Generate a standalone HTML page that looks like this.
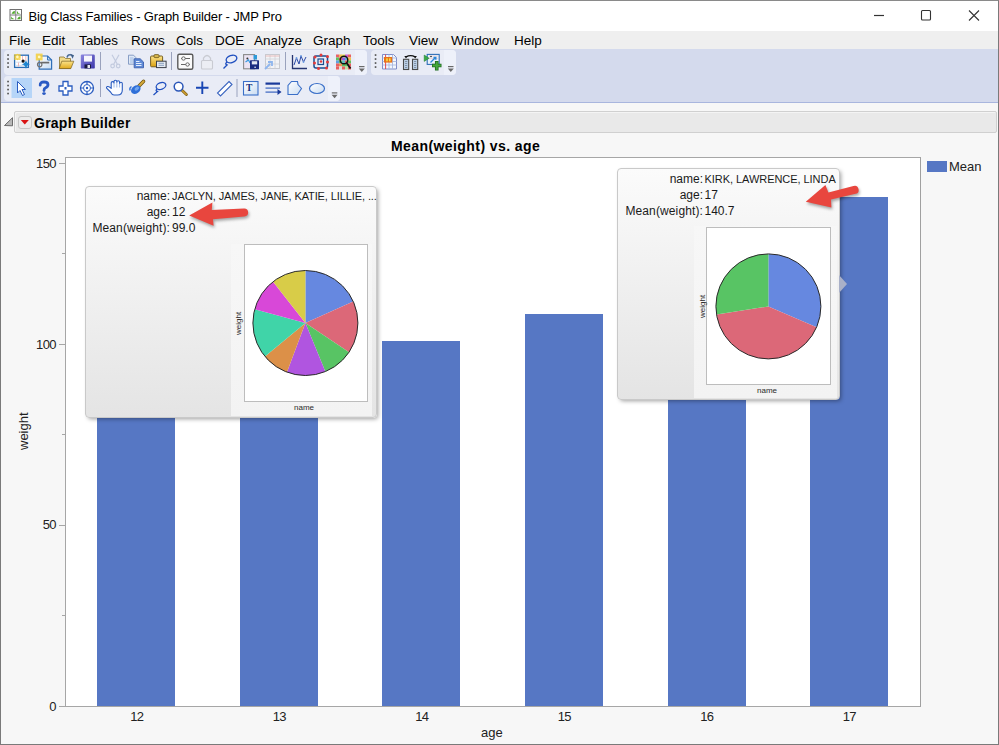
<!DOCTYPE html>
<html><head><meta charset="utf-8">
<style>
*{box-sizing:border-box}
html,body{margin:0;padding:0}
body{width:999px;height:745px;overflow:hidden;position:relative;background:#f7f7f7;font-family:"Liberation Sans",sans-serif;color:#000}
.a{position:absolute}
.t{position:absolute;white-space:nowrap;line-height:1}
#win{left:0;top:0;width:999px;height:745px;border:1px solid #7a7a7a;border-top-color:#8a8a8a}
#titlebar{left:1px;top:1px;width:997px;height:30px;background:#fff}
#menubar{left:1px;top:31px;width:997px;height:18px;background:#efefef}
#tbarea{left:1px;top:49px;width:997px;height:54px;background:#d4daed;border-bottom:1px solid #a9b6de}
.panel{position:absolute;background:#e9ecf6;border-radius:4px}
.menu{position:absolute;top:34px;font-size:13.5px;line-height:14px;white-space:nowrap;color:#000}
#hdr{left:14px;top:111px;width:983px;height:22px;background:#e9e9e9;border:1px solid #d0d0d0;border-radius:2px;box-shadow:inset 1px 1px 0 #f4f4f4}
.frame{left:65px;top:157px;width:856px;height:550px;background:#fff;border:1px solid #a6a6a6;border-right-color:#a0a0a0}
.bar{position:absolute;background:#5677c4;bottom:0}
.ylab{position:absolute;font-size:13px;line-height:13px;color:#222;text-align:right;width:30px;letter-spacing:-0.6px}
.tick{position:absolute;height:1px;width:6px;background:#a6a6a6;left:59px}
.xlab{position:absolute;font-size:13px;line-height:13px;color:#222;width:40px;text-align:center;top:709.5px;letter-spacing:-0.6px;text-indent:0.6px}
.tip{position:absolute;border:1px solid #c9c9c9;border-radius:4px;background:linear-gradient(#fbfbfb,#e4e4e4);box-shadow:2px 2px 4px -1px rgba(0,0,0,0.38)}
.tiptext{position:absolute;font-size:12px;line-height:16px;white-space:nowrap;color:#1a1a1a}
.col{background:linear-gradient(#f7f7f7,#f3f3f3)}
.pframe{background:#fff;border:1px solid #bdbdbd}
.plab{position:absolute;font-size:8px;line-height:9px;white-space:nowrap;color:#2a2a2a}
</style></head>
<body>
<div class="a" id="titlebar"></div>
<div class="a" id="menubar"></div>
<div class="a" id="tbarea"></div>
<div class="a" id="win"></div>

<!-- title -->
<div class="t" style="left:28.5px;top:10px;font-size:13px;color:#000;letter-spacing:-0.15px">Big Class Families - Graph Builder - JMP Pro</div>

<!-- menu -->
<div class="menu" style="left:9px">File</div>
<div class="menu" style="left:42px">Edit</div>
<div class="menu" style="left:79px">Tables</div>
<div class="menu" style="left:131px">Rows</div>
<div class="menu" style="left:176px">Cols</div>
<div class="menu" style="left:215px">DOE</div>
<div class="menu" style="left:254px">Analyze</div>
<div class="menu" style="left:313px">Graph</div>
<div class="menu" style="left:363px">Tools</div>
<div class="menu" style="left:409px">View</div>
<div class="menu" style="left:451px">Window</div>
<div class="menu" style="left:514px">Help</div>

<!-- toolbar panels -->
<div class="panel" style="left:4px;top:50px;width:363px;height:25px"></div>
<div class="panel" style="left:371px;top:50px;width:85px;height:25px"></div>
<div class="panel" style="left:4px;top:76px;width:336px;height:25px"></div>
<div class="a" style="left:355px;top:50px;width:12px;height:25px;background:#eef1fa;border-radius:0 4px 4px 0"></div>
<div class="a" style="left:444px;top:50px;width:12px;height:25px;background:#eef1fa;border-radius:0 4px 4px 0"></div>
<div class="a" style="left:328px;top:76px;width:12px;height:25px;background:#eef1fa;border-radius:0 4px 4px 0"></div>

<svg class="a" style="left:0;top:0" width="999" height="105" viewBox="0 0 999 105">
<defs>
<linearGradient id="gFolder" x1="0" y1="0" x2="0" y2="1"><stop offset="0" stop-color="#fbe38a"/><stop offset="1" stop-color="#e0a91c"/></linearGradient>
<linearGradient id="gFloppy" x1="0" y1="0" x2="1" y2="1"><stop offset="0" stop-color="#8c86e0"/><stop offset="1" stop-color="#3a35a8"/></linearGradient>
<linearGradient id="gClip" x1="0" y1="0" x2="0" y2="1"><stop offset="0" stop-color="#fde48a"/><stop offset="1" stop-color="#d9a010"/></linearGradient>
<linearGradient id="gPale" x1="0" y1="0" x2="1" y2="1"><stop offset="0" stop-color="#ffffff"/><stop offset="1" stop-color="#c9dcf2"/></linearGradient>
</defs>
<!-- title icon -->
<g>
<rect x="10" y="9.5" width="11.5" height="11" fill="#fff" stroke="#707070" stroke-width="1"/>
<line x1="15.75" y1="9.5" x2="15.75" y2="20.5" stroke="#808080" stroke-width="1"/>
<line x1="10" y1="15" x2="21.5" y2="15" stroke="#808080" stroke-width="1"/>
<path d="M11.5,13.8 L14.8,13.8 L14.8,10.8 Q12.5,11.5 11.5,13.8Z" fill="#4fa82a"/>
<path d="M17,11 Q18,13.5 20.5,13.8 L17,13.8Z" fill="#4fa82a"/>
<path d="M11.2,16.2 Q12,19 14.8,19.2 L11.2,19.2Z" fill="#4fa82a"/>
<path d="M17,19.2 L20.5,19.2 L20.5,16.2 Q18,16.8 17,19.2Z" fill="#4fa82a"/>
</g>
<!-- window controls -->
<line x1="874" y1="15.5" x2="884" y2="15.5" stroke="#333" stroke-width="1.2"/>
<rect x="921.5" y="10.5" width="9" height="9.5" rx="1" fill="none" stroke="#333" stroke-width="1.1"/>
<path d="M969,10.5 L979,20.5 M979,10.5 L969,20.5" stroke="#333" stroke-width="1.1"/>

<!-- grips -->
<g fill="#4a4a4a">
<rect x="7.25" y="54.25" width="1.6" height="1.6"/><rect x="7.25" y="58.25" width="1.6" height="1.6"/><rect x="7.25" y="62.25" width="1.6" height="1.6"/><rect x="7.25" y="66.25" width="1.6" height="1.6"/>
<rect x="374.75" y="54.25" width="1.6" height="1.6"/><rect x="374.75" y="58.25" width="1.6" height="1.6"/><rect x="374.75" y="62.25" width="1.6" height="1.6"/><rect x="374.75" y="66.25" width="1.6" height="1.6"/>
<rect x="7.25" y="80.75" width="1.6" height="1.6"/><rect x="7.25" y="84.75" width="1.6" height="1.6"/><rect x="7.25" y="88.75" width="1.6" height="1.6"/><rect x="7.25" y="92.75" width="1.6" height="1.6"/>
</g>
<!-- separators -->
<g fill="#9aa2bd">
<rect x="100" y="52" width="1" height="18"/><rect x="171" y="52" width="1" height="18"/><rect x="285" y="52" width="1" height="18"/>
<rect x="100" y="79" width="1" height="18"/><rect x="236.5" y="79" width="1" height="18"/>
</g>
<!-- dropdown glyphs -->
<g fill="#6a6a6a">
<rect x="359" y="66" width="5.5" height="1.2"/><path d="M358.8,68.5 L364.8,68.5 L361.8,72Z"/>
<rect x="448" y="66" width="5.5" height="1.2"/><path d="M447.8,68.5 L453.8,68.5 L450.8,72Z"/>
<rect x="331.8" y="92.3" width="5.5" height="1.2"/><path d="M331.6,94.8 L337.6,94.8 L334.6,98.3Z"/>
</g>

<!-- ROW 1 -->
<!-- new data table -->
<g>
<rect x="14.6" y="55.2" width="13.8" height="12.2" fill="#fff" stroke="#2a6db5" stroke-width="1.3"/>
<path d="M15.5,62.2 H28 M15.5,65.4 H28" stroke="#c8d8ea" stroke-width="0.8"/>
<path d="M22.5,56 V61 M25.8,56 V61 M18.5,62.5 V66.5" stroke="#f0a8a8" stroke-width="0.8"/>
<path d="M17.4,53.4 L18.4,56 L21,57 L18.4,58 L17.4,60.6 L16.4,58 L13.8,57 L16.4,56Z" fill="#f2c62a"/>
<rect x="14.2" y="54" width="6.4" height="6" fill="#f5cf3a" opacity="0.75"/>
<circle cx="17.4" cy="57" r="1.4" fill="#fff7c0"/>
<circle cx="23.1" cy="61.1" r="1.6" fill="#111"/>
<path d="M26,60 Q26.6,63.6 30,64.3 Q26.6,65 26,69 Q25.4,65 21.5,64.3 Q25.4,63.6 26,60Z" fill="#1e86d0"/>
</g>
<!-- new script -->
<g>
<path d="M39.2,56 H47.6 L51.6,60 V69.2 H39.2Z" fill="url(#gPale)" stroke="#2f6fb8" stroke-width="1.2"/>
<path d="M47.6,56 V60 H51.6" fill="none" stroke="#2f6fb8" stroke-width="1"/>
<rect x="35.8" y="53.6" width="6.8" height="6.8" fill="#f5cf3a" opacity="0.85"/>
<circle cx="39.2" cy="57" r="1.4" fill="#fff7c0"/>
<path d="M40.5,62.6 H49.2" stroke="#6a6a6a" stroke-width="1.7"/>
<circle cx="39.7" cy="64.6" r="2.2" fill="none" stroke="#737373" stroke-width="1.2"/>
</g>
<!-- open -->
<g>
<path d="M59.5,57 H64 L65.5,58.5 H70.5 V68.5 H59.5Z" fill="#f3dc8a" stroke="#8a7430" stroke-width="0.8"/>
<path d="M61.8,61.2 H73.8 L70.8,68.6 H59.2Z" fill="url(#gFolder)" stroke="#7a6020" stroke-width="0.7"/>
<path d="M67,57.5 Q68,53.8 71.5,55" fill="none" stroke="#4f6f98" stroke-width="1.5"/>
<path d="M70.2,53.8 L74,55.2 L72.6,58.8Z" fill="#3f5f88"/>
</g>
<!-- save -->
<g>
<rect x="80.8" y="54.6" width="14" height="14" rx="1.2" fill="url(#gFloppy)"/>
<rect x="84" y="55.6" width="8" height="6" fill="#f6f6fc"/>
<rect x="84.5" y="64.4" width="6.5" height="4" fill="#1a1a40"/>
<rect x="87.5" y="65" width="2.5" height="3" fill="#e8e8f0"/>
</g>
<!-- copy -->
<g>
<path d="M128.5,55.2 H133.5 L135.8,57.5 V64.2 H128.5Z" fill="#dfe8f6" stroke="#7d95c0" stroke-width="0.9"/>
<path d="M130,58 H133.5 M130,60 H134 M130,62 H134" stroke="#8fb0e0" stroke-width="0.8"/>
<path d="M134.2,58.8 H140.2 L143.5,62 V67.8 H134.2Z" fill="#5f8ad6" stroke="#3a5fae" stroke-width="0.9"/>
<path d="M136,61.5 H139.5 M136,63.5 H141.5 M136,65.5 H141.5" stroke="#f4f8ff" stroke-width="0.9"/>
</g>
<!-- paste -->
<g>
<rect x="150.6" y="56" width="12" height="10.8" rx="1" fill="url(#gClip)" stroke="#6a5418" stroke-width="0.9"/>
<rect x="154" y="54.6" width="5" height="3" rx="1" fill="#d8b850" stroke="#5a4810" stroke-width="0.7"/>
<rect x="156.5" y="61.2" width="9.6" height="6.4" fill="#e6ebf3" stroke="#3a3f4a" stroke-width="1"/>
<path d="M158.5,63.3 H164 M158.5,65.3 H164" stroke="#6f8ab0" stroke-width="0.8"/>
</g>
<!-- scissors2 -->
<g stroke="#c2cade" fill="none" stroke-width="1.2">
<path d="M112,54.8 L117.2,64 M119,54.8 L113.8,64"/>
<circle cx="112.6" cy="66" r="1.8"/><circle cx="118.2" cy="66" r="1.8"/>
</g>
<!-- data filter -->
<g>
<rect x="177.8" y="54.3" width="15" height="15" rx="1.5" fill="#fafafa" stroke="#5a5a5a" stroke-width="1.4"/>
<path d="M181,58.5 H190 M181,64.5 H190" stroke="#666" stroke-width="1"/>
<circle cx="183.5" cy="58.5" r="1.7" fill="#fff" stroke="#666" stroke-width="1"/>
<circle cx="187.5" cy="64.5" r="1.7" fill="#fff" stroke="#666" stroke-width="1"/>
</g>
<!-- lock disabled -->
<g>
<path d="M203.5,60.5 V58 Q207,53 210.5,58 V60.5" fill="none" stroke="#c9cbd2" stroke-width="1.3"/>
<rect x="201.5" y="60.5" width="11" height="8.5" rx="1" fill="#eceef4" stroke="#c9cbd2" stroke-width="1.1"/>
</g>
<!-- lasso -->
<g fill="none" stroke="#1f4fbf" stroke-width="1.4">
<ellipse cx="231.5" cy="59" rx="5.5" ry="3.5" transform="rotate(-20 231.5 59)"/>
<path d="M227,62 Q224.5,64 227,65 L223.5,68.5"/>
</g>
<!-- report/save icon -->
<g>
<rect x="243.6" y="54.6" width="11" height="14.2" fill="#ece4f4" stroke="#8a8a8a" stroke-width="1.1"/>
<circle cx="247.4" cy="58.6" r="1" fill="#333"/>
<path d="M245.5,62 L248.5,60 L250,63" fill="none" stroke="#3a9ae0" stroke-width="1.2"/>
<rect x="253.5" y="55" width="3.5" height="4.5" fill="#2e9ad8"/>
<rect x="250" y="60.2" width="9" height="9" rx="0.5" fill="#1a2c80"/>
<rect x="251.8" y="61.2" width="5.4" height="3.2" fill="#e4e8f4"/>
<rect x="254.5" y="66.6" width="1.2" height="1.4" fill="#fff"/>
</g>
<!-- disabled table -->
<g>
<rect x="265.5" y="54.5" width="14" height="14" fill="#f2f3f6" stroke="#c8cad0" stroke-width="1"/>
<path d="M265.5,59 H279.5 M265.5,64 H279.5 M270,54.5 V68.5 M275,54.5 V68.5" stroke="#cfd1d8" stroke-width="0.8"/>
<path d="M265.5,56 H279.5" stroke="#e8b0b0" stroke-width="0.8"/>
<path d="M265,69 L270,64 M268,62 H272 V66" fill="none" stroke="#8fb6ee" stroke-width="1.8"/>
</g>
<!-- line chart -->
<g>
<path d="M292.5,55 V68.5 H307" fill="none" stroke="#253470" stroke-width="1.3"/>
<path d="M294,65 L296.5,58 L299,64 L301,56 L303.5,62 L306,57" fill="none" stroke="#2a4aa8" stroke-width="1"/>
<circle cx="296.5" cy="58" r="0.9" fill="#6a9ae0"/><circle cx="301" cy="56" r="0.9" fill="#6a9ae0"/><circle cx="303.5" cy="62" r="0.9" fill="#6a9ae0"/>
</g>
<!-- cube -->
<g>
<rect x="314" y="56" width="13.5" height="12" rx="2" fill="none" stroke="#1a4d90" stroke-width="1.5"/>
<rect x="318" y="59" width="5.5" height="5.5" fill="none" stroke="#1a4d90" stroke-width="1.2"/>
<g fill="#e33b3b"><circle cx="315" cy="57" r="1.5"/><circle cx="321" cy="55" r="1.5"/><circle cx="327.5" cy="56.5" r="1.5"/><circle cx="314.5" cy="63" r="1.5"/><circle cx="327.5" cy="62" r="1.5"/><circle cx="318.5" cy="68.5" r="1.5"/><circle cx="326.5" cy="68" r="1.5"/><circle cx="321" cy="61.5" r="1.2"/></g>
</g>
<!-- heatmap magnifier -->
<g>
<rect x="336" y="54.5" width="15" height="15" fill="#eee"/>
<g>
<rect x="336" y="54.5" width="3" height="3" fill="#e8606a"/><rect x="339" y="54.5" width="3" height="3" fill="#f0c050"/><rect x="342" y="54.5" width="3" height="3" fill="#e8e860"/><rect x="345" y="54.5" width="3" height="3" fill="#d060d0"/><rect x="348" y="54.5" width="3" height="3" fill="#e86060"/>
<rect x="336" y="57.5" width="3" height="3" fill="#60c060"/><rect x="339" y="57.5" width="3" height="3" fill="#e86060"/><rect x="342" y="57.5" width="3" height="3" fill="#9060e0"/><rect x="345" y="57.5" width="3" height="3" fill="#60b0e0"/><rect x="348" y="57.5" width="3" height="3" fill="#f0c050"/>
<rect x="336" y="60.5" width="3" height="3" fill="#60a0e0"/><rect x="339" y="60.5" width="3" height="3" fill="#60c060"/><rect x="342" y="60.5" width="3" height="3" fill="#60c0c0"/><rect x="345" y="60.5" width="3" height="3" fill="#e86060"/><rect x="348" y="60.5" width="3" height="3" fill="#60c060"/>
<rect x="336" y="63.5" width="3" height="3" fill="#e86060"/><rect x="339" y="63.5" width="3" height="3" fill="#f09050"/><rect x="342" y="63.5" width="3" height="3" fill="#60c060"/><rect x="345" y="63.5" width="3" height="3" fill="#60c060"/><rect x="348" y="63.5" width="3" height="3" fill="#e86060"/>
<rect x="336" y="66.5" width="3" height="3" fill="#e86060"/><rect x="339" y="66.5" width="3" height="3" fill="#e0e0e0"/><rect x="342" y="66.5" width="3" height="3" fill="#e86060"/><rect x="345" y="66.5" width="3" height="3" fill="#c0e0a0"/><rect x="348" y="66.5" width="3" height="3" fill="#e86060"/>
</g>
<circle cx="344" cy="60" r="3.8" fill="none" stroke="#111" stroke-width="1.4"/>
<path d="M346.5,62.8 L350.5,68.5" stroke="#111" stroke-width="1.8"/>
</g>
<!-- panel2 icons -->
<g>
<path d="M382.5,54.5 H393.5 L396.5,57.5 V69 H382.5Z" fill="#f4f7fd" stroke="#7f8cc8" stroke-width="1"/>
<path d="M382.5,58 H396.5 M382.5,61.5 H396.5 M382.5,65 H396.5 M389,54.5 V69 M392.5,54.5 V69" stroke="#a8b8e0" stroke-width="0.9"/>
<path d="M385.6,54.5 V69" stroke="#e03a3a" stroke-width="0.9"/>
<rect x="384" y="57" width="8.2" height="5.6" fill="#e8721a"/>
<rect x="386.2" y="58.3" width="1.6" height="3" fill="#f8e040"/><rect x="389" y="58.3" width="1.6" height="3" fill="#f8e040"/>
</g>
<g>
<rect x="403.5" y="59.3" width="5.2" height="10.2" fill="#bcd0e6" stroke="#4a4a4a" stroke-width="1.1"/>
<rect x="412.5" y="59.3" width="5.2" height="10.2" fill="#bcd0e6" stroke="#4a4a4a" stroke-width="1.1"/>
<path d="M405,61.5 H407.2 M405,63.5 H407.2 M405,65.5 H407.2 M405,67.5 H407.2 M414,61.5 H416.2 M414,63.5 H416.2 M414,65.5 H416.2 M414,67.5 H416.2" stroke="#5a6a80" stroke-width="0.6"/>
<path d="M406,56.8 Q410.6,54.6 415.2,56.8" fill="none" stroke="#111" stroke-width="1.3"/>
<path d="M404.3,56 L407.6,56 L406,58.6Z M413.6,56 L416.9,56 L415.2,58.6Z" fill="#111"/>
</g>
<g>
<rect x="427.2" y="54.4" width="12" height="10" fill="#eaf2fb" stroke="#2f6fb8" stroke-width="1.1"/>
<path d="M429,56 H438 M429,58.5 H438" stroke="#e8b8b8" stroke-width="0.5"/>
<circle cx="431" cy="56.5" r="0.8" fill="#222"/>
<path d="M430.5,62.5 L435.5,57.5 M433.5,57.5 H435.8 V59.8" fill="none" stroke="#2a86d8" stroke-width="1.4"/>
<path d="M424.2,55 L429.2,58.2 L424.2,61.4Z" fill="#3aa848" stroke="#1f7a2f" stroke-width="0.5"/>
<path d="M432,65.5 H441.5 M436.75,61 V70.5" stroke="#1f6a1f" stroke-width="3.6"/>
<path d="M432.7,65.5 H440.8 M436.75,61.7 V69.8" stroke="#44a83c" stroke-width="2"/>
</g>

<!-- ROW 2 -->
<rect x="11.5" y="78" width="20.5" height="20" fill="#b6d5f8"/>
<path d="M17.5,81.5 V93 L20,90.5 L22.5,95.5 L24.5,94.5 L22,89.5 L25.5,89.5Z" fill="#fff" stroke="#2a5cc0" stroke-width="1" stroke-linejoin="round"/>
<!-- ? -->
<path d="M40.2,85.2 Q40,82 44,82 Q48,82 48,84.8 Q48,86.8 45.6,87.8 Q44,88.5 44,90.6" fill="none" stroke="#2a5ac4" stroke-width="2.8" stroke-linecap="round"/>
<ellipse cx="44" cy="93.6" rx="1.8" ry="1.4" fill="#2a5ac4"/>
<!-- move cross -->
<path d="M63,81.5 H68 V86 H72 V91 H68 V95 H63 V91 H59 V86 H63Z" fill="#fff" stroke="#2a5cc0" stroke-width="1.3"/>
<rect x="64.5" y="87" width="2" height="2.5" fill="#2a5cc0"/>
<!-- target -->
<circle cx="87" cy="88" r="6.5" fill="#fff" stroke="#2a5cc0" stroke-width="1.3"/>
<circle cx="87" cy="88" r="3.5" fill="none" stroke="#2a5cc0" stroke-width="1"/>
<circle cx="87" cy="88" r="1.2" fill="#2a5cc0"/>
<path d="M87,81.5 V84 M87,92 V94.5 M80.5,88 H83 M91,88 H93.5" stroke="#2a5cc0" stroke-width="1.2"/>
<!-- hand -->
<path d="M110.5,92 L106.8,88.4 Q106,87 107.4,86.5 Q108.6,86.2 110,87.4 L111.2,88.4 V83 Q111.2,81.6 112.6,81.6 Q114,81.6 114,83 V81.6 Q114,80.2 115.4,80.2 Q116.8,80.2 116.8,81.6 V82.2 Q116.8,80.8 118.2,80.8 Q119.6,80.8 119.6,82.2 V83.6 Q119.6,82.3 120.9,82.3 Q122.3,82.3 122.3,83.6 V90 Q122.3,95 117.5,95 H114 Q112,95 110.5,92Z" fill="#fbfcff" stroke="#2a5cc0" stroke-width="1.1" stroke-linejoin="round"/>
<path d="M114,83 V87.5 M116.8,82.2 V87.5 M119.6,83.6 V87.5" stroke="#8aa8e0" stroke-width="0.8"/>
<!-- brush -->
<path d="M138.8,86.2 L143.6,81.2" stroke="#6a5010" stroke-width="3.4" stroke-linecap="round"/>
<path d="M138.8,86.2 L143.6,81.2" stroke="#d4a838" stroke-width="2" stroke-linecap="round"/>
<ellipse cx="135.8" cy="89.6" rx="5.2" ry="3.8" transform="rotate(-35 135.8 89.6)" fill="#2f6fd8"/>
<ellipse cx="136.8" cy="88.6" rx="2.5" ry="1.6" transform="rotate(-35 136.8 88.6)" fill="#6fa4f0"/>
<path d="M131.5,86.5 Q129,88 130.2,90.5" fill="none" stroke="#2f6fd8" stroke-width="1.3"/>
<!-- lasso 2 -->
<g fill="none" stroke="#1f4fbf" stroke-width="1.3">
<ellipse cx="161" cy="86" rx="5" ry="3.3" transform="rotate(-20 161 86)"/>
<path d="M157,89 Q155,91 157.5,91.5 L153.5,95"/>
</g>
<!-- magnifier -->
<path d="M181.2,89.6 L186.4,94.6" stroke="#7a5a10" stroke-width="2.8" stroke-linecap="round"/>
<path d="M181.2,89.6 L186.2,94.4" stroke="#c89a30" stroke-width="1.6" stroke-linecap="round"/>
<circle cx="178.6" cy="86.6" r="4.4" fill="#fff" stroke="#2a56b8" stroke-width="1.5"/>
<!-- plus -->
<path d="M202.3,81.5 V94 M196,87.8 H208.5" stroke="#1846b4" stroke-width="1.9"/>
<!-- ruler -->
<path d="M229,81.5 L232,84.5 L220.5,96 L217.5,93Z" fill="#fff" stroke="#3a64c0" stroke-width="1.1"/>
<!-- T box -->
<rect x="243.5" y="81.5" width="14.5" height="13.5" fill="url(#gPale)" stroke="#3a6fc8" stroke-width="1.1"/>
<text x="246" y="90.8" font-family="Liberation Serif" font-weight="bold" font-size="9.5" fill="#14307f">T</text>
<!-- lines -->
<rect x="265.5" y="82.5" width="14.5" height="2.2" fill="#1a3a9a"/>
<rect x="265.5" y="87.5" width="14.5" height="1.2" fill="#3a64c0"/>
<rect x="265.5" y="91.5" width="12.5" height="1.2" fill="#3a64c0"/>
<path d="M277.5,89 L281.5,92 L277.5,95Z" fill="#1a3a9a"/>
<!-- polygon -->
<path d="M291.5,81.5 H297.5 L298,84.5 L301.5,88.5 L297.5,94.5 H288 V85.5Z" fill="url(#gPale)" stroke="#3a6fc8" stroke-width="1.1"/>
<!-- ellipse -->
<ellipse cx="317" cy="88.5" rx="7.5" ry="5" fill="url(#gPale)" stroke="#3a6fc8" stroke-width="1.2"/>
</svg>

<!-- header -->
<div class="a" id="hdr"></div>
<svg class="a" style="left:0;top:108px" width="40" height="28" viewBox="0 108 40 28">
<path d="M4.5,125.5 L12.5,117.7 V125.8Z" fill="#b8b8b8" stroke="#606060" stroke-width="0.9" stroke-linejoin="round"/>
<rect x="18.5" y="116.5" width="13" height="12" rx="2.5" fill="#ececec" stroke="#c6c6c6" stroke-width="1"/>
<path d="M20.8,120 H28.8 L24.8,124.6Z" fill="#d91414"/>
</svg>
<div class="t" style="left:34px;top:115.5px;font-size:14px;font-weight:bold;letter-spacing:0.25px">Graph Builder</div>

<!-- chart -->
<div class="t" style="left:391px;top:138.7px;font-size:14px;font-weight:bold;letter-spacing:0.42px">Mean(weight) vs. age</div>
<div class="a frame">
  <div class="bar" style="left:31px;width:78px;height:358px"></div>
  <div class="bar" style="left:174px;width:78px;height:380px"></div>
  <div class="bar" style="left:316px;width:78px;height:365px"></div>
  <div class="bar" style="left:459px;width:78px;height:392px"></div>
  <div class="bar" style="left:601.5px;width:78px;height:460px"></div>
  <div class="bar" style="left:744px;width:78px;height:509px"></div>
</div>
<div class="tick" style="top:163px"></div>
<div class="tick" style="top:344px"></div>
<div class="tick" style="top:525px"></div>
<div class="tick" style="top:706px"></div>
<div class="tick" style="top:615px;left:62px;width:3px"></div>
<div class="tick" style="top:434px;left:62px;width:3px"></div>
<div class="tick" style="top:253px;left:62px;width:3px"></div>
<div class="ylab" style="left:26px;top:156.5px">150</div>
<div class="ylab" style="left:26px;top:337.5px">100</div>
<div class="ylab" style="left:26px;top:518.3px">50</div>
<div class="ylab" style="left:26px;top:700px">0</div>
<div class="xlab" style="left:116.5px">12</div>
<div class="xlab" style="left:259px">13</div>
<div class="xlab" style="left:401.5px">14</div>
<div class="xlab" style="left:544px">15</div>
<div class="xlab" style="left:686.5px">16</div>
<div class="xlab" style="left:829px">17</div>
<div class="t" style="left:481px;top:726px;font-size:13px;color:#222">age</div>
<div class="t" style="left:17px;top:450px;font-size:13px;color:#222;transform:rotate(-90deg);transform-origin:0 0">weight</div>
<div class="a" style="left:927px;top:161px;width:20px;height:11px;background:#5677c4"></div>
<div class="t" style="left:949px;top:160px;font-size:13px;color:#222">Mean</div>


<!-- tooltip 1 -->
<div class="tip" style="left:85px;top:186px;width:292px;height:232px">
  <div class="a col" style="left:145px;top:57px;width:141px;height:172px"></div>
</div>
<div class="tiptext" style="left:60px;top:188px;width:110px;text-align:right">name:</div>
<div class="tiptext" style="left:172px;top:188px;font-size:11px;letter-spacing:-0.1px">JACLYN, JAMES, JANE, KATIE, LILLIE, ...</div>
<div class="tiptext" style="left:60px;top:204px;width:110px;text-align:right">age:</div>
<div class="tiptext" style="left:172px;top:204px">12</div>
<div class="tiptext" style="left:60px;top:220px;width:110px;text-align:right;letter-spacing:0.12px">Mean(weight):</div>
<div class="tiptext" style="left:172px;top:220px">99.0</div>
<div class="a pframe" style="left:244px;top:244px;width:124px;height:158px">
<svg class="a" style="left:-1px;top:-1px" width="124" height="158" viewBox="0 0 124 158">
<path d="M61.4,79 L61.40,26.50 A52.5,52.5 0 0 1 109.25,57.40 Z" fill="#6688e0"/>
<path d="M61.4,79 L109.25,57.40 A52.5,52.5 0 0 1 105.08,108.13 Z" fill="#dc6878"/>
<path d="M61.4,79 L105.08,108.13 A52.5,52.5 0 0 1 81.32,127.57 Z" fill="#58c464"/>
<path d="M61.4,79 L81.32,127.57 A52.5,52.5 0 0 1 42.93,128.14 Z" fill="#b055e0"/>
<path d="M61.4,79 L42.93,128.14 A52.5,52.5 0 0 1 20.89,112.39 Z" fill="#dc9048"/>
<path d="M61.4,79 L20.89,112.39 A52.5,52.5 0 0 1 10.74,65.24 Z" fill="#40d4a8"/>
<path d="M61.4,79 L10.74,65.24 A52.5,52.5 0 0 1 29.08,37.63 Z" fill="#d848d8"/>
<path d="M61.4,79 L29.08,37.63 A52.5,52.5 0 0 1 61.40,26.50 Z" fill="#d8cc48"/>
<circle cx="61.4" cy="79" r="52.5" fill="none" stroke="#2a2a2a" stroke-width="1"/>
</svg>
</div>
<div class="plab" style="left:234px;top:335px;transform:rotate(-90deg);transform-origin:0 0">weight</div>
<div class="plab" style="left:294px;top:403px">name</div>

<!-- tooltip 2 -->
<div class="tip" style="left:617px;top:168px;width:223px;height:232px">
  <div class="a col" style="left:76px;top:57px;width:143px;height:172px"></div>
</div>
<div class="tiptext" style="left:593px;top:170.5px;width:110px;text-align:right">name:</div>
<div class="tiptext" style="left:704.5px;top:170.5px;font-size:11px;letter-spacing:-0.05px">KIRK, LAWRENCE, LINDA</div>
<div class="tiptext" style="left:593px;top:186.5px;width:110px;text-align:right">age:</div>
<div class="tiptext" style="left:704.5px;top:186.5px">17</div>
<div class="tiptext" style="left:593px;top:202.5px;width:110px;text-align:right;letter-spacing:0.12px">Mean(weight):</div>
<div class="tiptext" style="left:704.5px;top:202.5px">140.7</div>
<div class="a pframe" style="left:706px;top:227px;width:125px;height:158px">
<svg class="a" style="left:0px;top:-1px" width="124" height="158" viewBox="0 0 124 158">
<path d="M61.4,79.4 L61.40,26.90 A52.5,52.5 0 0 1 109.62,100.17 Z" fill="#6688e0"/>
<path d="M61.4,79.4 L109.62,100.17 A52.5,52.5 0 0 1 9.53,87.52 Z" fill="#dc6878"/>
<path d="M61.4,79.4 L9.53,87.52 A52.5,52.5 0 0 1 61.40,26.90 Z" fill="#58c464"/>
<circle cx="61.4" cy="79.4" r="52.5" fill="none" stroke="#2a2a2a" stroke-width="1"/>
</svg>
</div>
<div class="plab" style="left:697.5px;top:317.5px;transform:rotate(-90deg);transform-origin:0 0">weight</div>
<div class="plab" style="left:757px;top:386px">name</div>
<svg class="a" style="left:839px;top:275px" width="9" height="18"><path d="M0,0 L8,9 L0,18 Z" fill="#a9b0c8"/></svg>


<svg class="a" style="left:0;top:0;filter:drop-shadow(1.5px 2px 1.5px rgba(0,0,0,0.35))" width="999" height="400" viewBox="0 0 999 400">
<path d="M189.2,215.4 L212.4,202.6 L211.8,210 L244,208.5 A4,4 0 0 1 244.3,216.5 L213,219.3 L213.6,225.8Z" fill="#e8463e"/>
<path d="M805.8,201.8 L825.4,185 L828.4,192.6 L853.5,186 A4,4 0 0 1 855.6,193.8 L831,199.6 L831.4,207.4Z" fill="#e8463e"/>
</svg>
</body></html>
